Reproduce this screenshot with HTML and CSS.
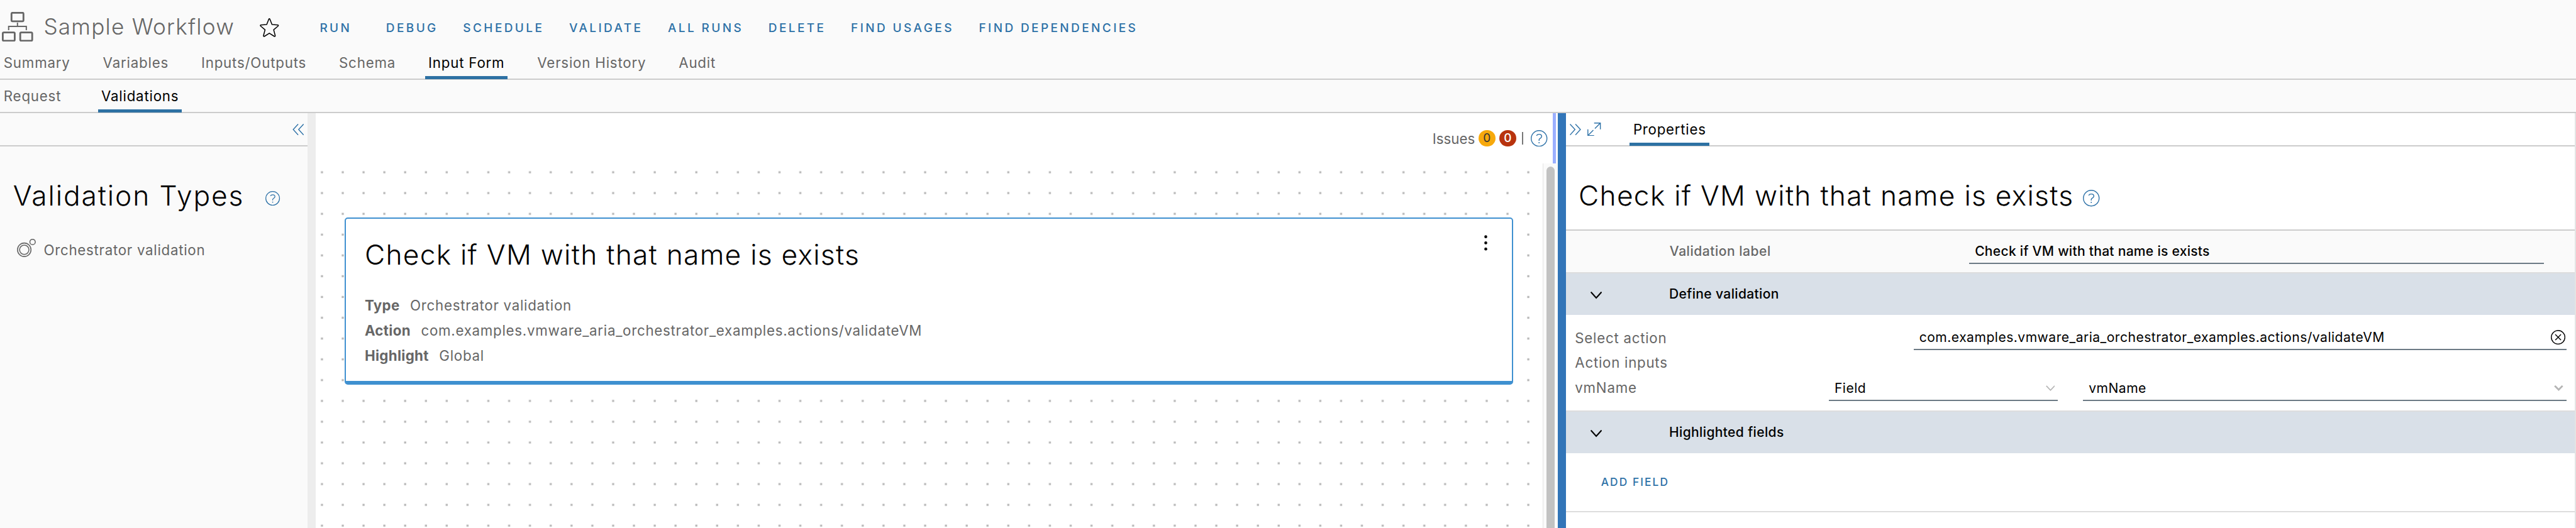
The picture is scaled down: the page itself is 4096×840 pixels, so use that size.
FILE: index.html
```html
<!DOCTYPE html>
<html lang="en">
<head>
<meta charset="utf-8">
<title>Sample Workflow</title>
<link rel="stylesheet" href="styles.css">
</head>
<body>
<div class="app">
  <header class="header">
    <svg class="icon-flow" viewBox="0 0 60 57" fill="none" stroke="currentColor">
      <rect x="18.5" y="1.5" width="23" height="16.5" rx="2" stroke-width="3.4"/>
      <rect x="1.7" y="39.5" width="23" height="16" rx="2" stroke-width="3.4"/>
      <rect x="35.3" y="39.5" width="23" height="16" rx="2" stroke-width="3.4"/>
      <path d="M30 20.5v7M13 35v-7.3h34V35" stroke-width="2.4"/>
    </svg>
    <h1 class="header-title">Sample Workflow</h1>
    <svg class="icon-star" viewBox="0 0 37 37" fill="none" stroke="currentColor" stroke-width="1.9" stroke-linejoin="round">
      <path d="M17.6 1.6q.9-1.4 1.8 0l4.2 10.6 11.3.9q1.6.6.3 2l-8.4 7.1 3 11.3q0 2-1.9 1.3L18.5 28.8l-9.4 6q-1.9.7-1.9-1.3l3-11.300L1.800 15.100q-1.300-1.400.3-2l11.300-.9z"/>
    </svg>
    <nav class="actions">
      <a class="action action-run">RUN</a>
      <a class="action">DEBUG</a>
      <a class="action">SCHEDULE</a>
      <a class="action">VALIDATE</a>
      <a class="action">ALL RUNS</a>
      <a class="action">DELETE</a>
      <a class="action">FIND USAGES</a>
      <a class="action">FIND DEPENDENCIES</a>
    </nav>
  </header>
  <nav class="tabs tabs-main">
    <a class="tab">Summary</a>
    <a class="tab">Variables</a>
    <a class="tab">Inputs/Outputs</a>
    <a class="tab">Schema</a>
    <a class="tab tab-active">Input Form</a>
    <a class="tab">Version History</a>
    <a class="tab">Audit</a>
  </nav>
  <nav class="tabs tabs-sub">
    <a class="tab">Request</a>
    <a class="tab tab-active">Validations</a>
  </nav>
  <main class="workspace">
    <aside class="palette">
      <div class="palette-bar">
        <svg class="icon-collapse" viewBox="0 0 22 22" fill="none" stroke="currentColor" stroke-width="1.7"><path d="M11 .6 1.5 11l9.5 10.4M21.4.6 11.9 11l9.5 10.4"/></svg>
      </div>
      <div class="palette-head">
        <h2 class="heading">Validation Types</h2>
        <svg class="icon-help" viewBox="0 0 32 32" fill="none" stroke="currentColor" stroke-width="1.7"><circle cx="16" cy="16" r="15.1"/><path d="M11 10.6c1.2-1.9 3-2.6 5-2.6 3 0 5 1.7 5 4.1 0 3.8-5 3.6-5 6.4v2"/><circle cx="16" cy="24.3" r="1.2" fill="currentColor" stroke="none"/></svg>
      </div>
      <div class="palette-item">
        <svg class="icon-node" viewBox="0 0 36 36" fill="none" stroke="currentColor" stroke-width="1.9"><circle cx="14" cy="21" r="13"/><circle cx="14" cy="21" r="9"/><circle cx="30" cy="6" r="5.2"/></svg>
        <span class="body">Orchestrator validation</span>
      </div>
    </aside>
    <div class="gutter"></div>
    <section class="stage">
      <div class="stage-bar">
        <span class="body issues">Issues</span>
        <span class="badge badge-warning">0</span>
        <span class="badge badge-error">0</span>
        <span class="divider"></span>
        <svg class="icon-help icon-help-lg" viewBox="0 0 32 32" fill="none" stroke="currentColor" stroke-width="1.7"><circle cx="16" cy="16" r="15.1"/><path d="M11 10.6c1.2-1.9 3-2.6 5-2.6 3 0 5 1.7 5 4.1 0 3.8-5 3.6-5 6.4v2"/><circle cx="16" cy="24.3" r="1.2" fill="currentColor" stroke="none"/></svg>
        <span class="edge"></span>
      </div>
      <div class="stage-body">
        <div class="canvas">
          <svg class="grid-dots" viewBox="0 0 2360 702" preserveAspectRatio="none">
            <defs><pattern id="dots" width="40" height="40" patternUnits="userSpaceOnUse"><rect x="10" y="15" width="4" height="4" fill="#b8b8b8"/></pattern></defs>
            <rect width="2360" height="702" fill="url(#dots)"/>
          </svg>
          <article class="card">
            <h2 class="heading heading-long">Check if VM with that name is exists</h2>
            <dl class="facts">
              <div class="fact"><dt>Type</dt><dd>Orchestrator validation</dd></div>
              <div class="fact"><dt>Action</dt><dd>com.examples.vmware_aria_orchestrator_examples.actions/validateVM</dd></div>
              <div class="fact"><dt>Highlight</dt><dd>Global</dd></div>
            </dl>
            <svg class="icon-kebab" viewBox="0 0 6 30"><circle cx="3" cy="3.2" r="2.8"/><circle cx="3" cy="15" r="2.8"/><circle cx="3" cy="26.8" r="2.8"/></svg>
          </article>
        </div>
        <div class="scroll"><div class="thumb"></div></div>
      </div>
    </section>
    <div class="resizer"></div>
    <aside class="props">
      <div class="props-bar">
        <svg class="icon-expand" viewBox="0 0 22 22" fill="none" stroke="currentColor" stroke-width="1.7"><path d="M.6.6 10.1 11 .6 21.4M11 .6 20.5 11 11 21.4"/></svg>
        <svg class="icon-full" viewBox="0 0 26 26" fill="none" stroke="currentColor" stroke-width="1.7"><path d="M13 1h12v12M25 1 14.5 11.5M13 25H1V13M1 25l10.5-10.5"/></svg>
        <a class="tab tab-active tab-props">Properties</a>
      </div>
      <div class="props-head">
        <h2 class="heading heading-long">Check if VM with that name is exists</h2>
        <svg class="icon-help icon-help-lg" viewBox="0 0 32 32" fill="none" stroke="currentColor" stroke-width="1.7"><circle cx="16" cy="16" r="15.1"/><path d="M11 10.6c1.2-1.9 3-2.6 5-2.6 3 0 5 1.7 5 4.1 0 3.8-5 3.6-5 6.4v2"/><circle cx="16" cy="24.3" r="1.2" fill="currentColor" stroke="none"/></svg>
      </div>
      <div class="label-row">
        <span class="field-label">Validation label</span>
        <div class="input input-label"><span>Check if VM with that name is exists</span></div>
      </div>
      <div class="band">
        <svg class="icon-caret" viewBox="0 0 22 14" fill="none" stroke="currentColor" stroke-width="2.6" stroke-linecap="round"><path d="M1.5 1.5 11 12l9.5-10.500"/></svg>
        <span>Define validation</span>
      </div>
      <div class="params">
        <span class="body">Select action</span>
        <div class="input input-action"><span>com.examples.vmware_aria_orchestrator_examples.actions/validateVM</span>
          <svg class="icon-clear" viewBox="0 0 28 28" fill="none" stroke="currentColor" stroke-width="1.7"><circle cx="14" cy="14" r="13.1"/><path d="m8.500 8.500 11 11m0-11-11 11"/></svg>
        </div>
        <span class="body">Action inputs</span>
        <span class="body">vmName</span>
        <div class="input input-kind"><span>Field</span>
          <svg class="icon-select" viewBox="0 0 18 11" fill="none" stroke="currentColor" stroke-width="2"><path d="m1 1 8 8.500L17 1"/></svg>
        </div>
        <div class="input input-value"><span>vmName</span>
          <svg class="icon-select" viewBox="0 0 18 11" fill="none" stroke="currentColor" stroke-width="3.4"><path d="M1.500 1 9 8.500 16.500 1"/></svg>
        </div>
      </div>
      <div class="band">
        <svg class="icon-caret" viewBox="0 0 22 14" fill="none" stroke="currentColor" stroke-width="2.6" stroke-linecap="round"><path d="M1.500 1.500 11 12l9.500-10.500"/></svg>
        <span>Highlighted fields</span>
      </div>
      <div class="add-row"><a class="action add-field">ADD FIELD</a></div>
    </aside>
  </main>
</div>
</body>
</html>
```
FILE: styles.css
```css
/* 1rem is ten layout units; the whole interface is sized from it */
html {
  font-size: 8.268px;
}

* {
  box-sizing: border-box;
}

body {
  margin: 0;
  font-family: Inter, "Noto Sans", sans-serif;
  font-size: 2.7rem;
  letter-spacing: 0.087rem;
  color: #666;
  background: #fff;
}

h1, h2, dl, dd {
  margin: 0;
  font-weight: 400;
}

svg {
  display: block;
  flex: none;
}

.app {
  display: flex;
  flex-direction: column;
  width: 100vw;
  height: 100vh;
  overflow: hidden;
  white-space: nowrap;
}

/* header */
.header {
  display: flex;
  align-items: center;
  height: 10.2rem;
  padding-left: 0.4rem;
  background: #fafafa;
}

.icon-flow {
  width: 6rem;
  height: 5.7rem;
}

.header-title {
  width: 41.6rem;
  margin-left: 2rem;
  font-size: 4.25rem;
  font-weight: 300;
  line-height: 1;
  letter-spacing: 0.147rem;
}

.icon-star {
  width: 3.7rem;
  height: 3.7rem;
  margin-top: 0.5rem;
  color: #000;
}

.actions {
  display: flex;
  gap: 4.8rem;
  margin: 0.5rem 0 0 7.8rem;
}

.action {
  font-size: 2.3rem;
  font-weight: 500;
  line-height: 1;
  letter-spacing: 0.41rem;
  color: #2d71a7;
}

.action-run {
  width: 7.95rem;
}

/* tabs */
.tabs {
  display: flex;
  padding-left: 0.1rem;
  gap: 5.08rem;
  border-bottom: 2px solid #ccc;
  background: #fafafa;
  letter-spacing: 0.095rem;
}

.tabs-main {
  height: 5.2rem;
}

.tabs-sub {
  gap: 6.5rem;
  height: 6.4rem;
}

.tab {
  position: relative;
  padding: 0 0.6rem;
  line-height: 3.9rem;
}

.tabs-sub .tab {
  line-height: 6.2rem;
}

.tab-active {
  color: #000;
}

.tab-active::after {
  content: "";
  position: absolute;
  right: 0;
  bottom: -1px;
  left: 0;
  height: 0.6rem;
  background: #2d71a3;
}

/* workspace */
.workspace {
  display: flex;
  flex: 1;
  min-height: 0;
}

.heading {
  font-size: 5.36rem;
  font-weight: 300;
  line-height: 1;
  letter-spacing: 0.231rem;
  color: #000;
}

.heading-long {
  letter-spacing: 0.151rem;
}

.icon-help {
  width: 2.8rem;
  height: 2.8rem;
  color: #2d71a7;
}

.icon-help-lg {
  width: 3.2rem;
  height: 3.2rem;
}

.palette {
  width: 59.1rem;
  background: #fafafa;
}

.palette-bar {
  display: flex;
  align-items: center;
  justify-content: flex-end;
  height: 6.4rem;
  padding: 0 0.7rem 0 0;
  border-bottom: 2px solid #ccc;
  color: #2d71a7;
}

.icon-collapse,
.icon-expand {
  width: 2.2rem;
  height: 2.2rem;
}

.palette-head {
  display: flex;
  align-items: center;
  margin: 6.8rem 0 0 2.5rem;
}

.palette-head .heading {
  width: 48.6rem;
}

.palette-head .icon-help {
  margin-top: 1.1rem;
}

.palette-item {
  display: flex;
  align-items: center;
  gap: 1.5rem;
  margin: 5.6rem 0 0 3.3rem;
}

.palette-item .body {
  margin-top: 0.7rem;
}

.icon-node {
  width: 3.6rem;
  height: 3.6rem;
}

.body {
  line-height: 1;
}

.gutter {
  width: 1.6rem;
  background: #ededed;
}

/* stage */
.stage {
  display: flex;
  flex-direction: column;
  width: 238.9rem;
}

.stage-bar {
  display: flex;
  align-items: center;
  justify-content: flex-end;
  height: 9.6rem;
}

.issues {
  margin: 0.2rem 0.7rem 0 0;
  letter-spacing: 0;
}

.badge {
  width: 3.2rem;
  height: 3.2rem;
  margin-right: 0.8rem;
  border-radius: 50%;
  font-size: 2.3rem;
  line-height: 3.2rem;
  letter-spacing: 0;
  text-align: center;
}

.badge-warning {
  color: #333;
  background: #f7a90c;
}

.badge-error {
  font-weight: 500;
  color: #fff;
  background: #b8330e;
}

.divider {
  width: 2px;
  height: 2.4rem;
  margin: 0 1.5rem 0 0.3rem;
  background: #777;
}

.edge {
  align-self: stretch;
  width: 0.6rem;
  margin: 0 0.4rem 0 1rem;
  background: #9bafff;
}

.stage-body {
  display: flex;
  flex: 1;
  min-height: 0;
  overflow: hidden;
}

.canvas {
  position: relative;
  flex: 1;
  padding: 10.4rem 5.7rem 0 5.6rem;
}

.grid-dots {
  position: absolute;
  top: 0;
  left: 0;
  width: 236rem;
  height: 70.2rem;
}

.card {
  position: relative;
  height: 32.2rem;
  padding: 4.3rem 0 0 3.6rem;
  border: 2px solid #3f90d0;
  border-bottom-width: 0.8rem;
  border-radius: 0.6rem;
  background: #fff;
}

.facts {
  margin-top: 4.7rem;
}

.fact {
  display: flex;
  gap: 2rem;
  line-height: 4.8rem;
}

.fact dt {
  font-weight: 700;
  letter-spacing: 0.04rem;
}

.icon-kebab {
  position: absolute;
  top: 3.2rem;
  right: 4.7rem;
  width: 0.6rem;
  height: 3rem;
  fill: #000;
}

.scroll {
  width: 2.9rem;
  padding: 0.6rem 0.5rem 0 0.6rem;
  border-left: 1px solid #e3e3e3;
  background: #fafafa;
}

.thumb {
  width: 1.6rem;
  height: 80rem;
  border-radius: 0.8rem;
  background: #c2c2c2;
}

.resizer {
  width: 1.6rem;
  background: #3275b8;
}

/* properties */
.props {
  flex: 1;
  color: #000;
  border-right: 2px solid #e4e4e4;
}

.props .body {
  color: #666;
}

.props-bar {
  display: flex;
  align-items: center;
  height: 6.4rem;
  padding-left: 0.7rem;
  border-bottom: 2px solid #ccc;
  color: #2d71a7;
}

.icon-full {
  width: 2.6rem;
  height: 2.6rem;
  margin-left: 1.2rem;
}

.tab-props {
  margin-left: 5.5rem;
  padding: 0 0.7rem;
  line-height: 6.2rem;
  color: #000;
}

.props-head {
  display: flex;
  align-items: center;
  height: 16.2rem;
  padding: 2.9rem 0 0 2.4rem;
  border-bottom: 2px solid #ccc;
}

.props-head .heading {
  width: 97rem;
}

.props-head .icon-help {
  margin-top: 1.1rem;
}

.label-row {
  display: flex;
  height: 8rem;
  padding-top: 1.4rem;
  background: #fafafa;
}

.field-label {
  width: 57.6rem;
  margin-left: 19.9rem;
  font-size: 2.55rem;
  font-weight: 500;
  line-height: 5rem;
  letter-spacing: 0.061rem;
  color: #666;
}

.input {
  display: flex;
  align-items: center;
  height: 5rem;
  padding: 0.2rem 0 0 1.1rem;
  border-bottom: 2px solid #6c7a85;
  font-size: 2.55rem;
  letter-spacing: 0.059rem;
}

.input svg {
  margin-left: auto;
}

.input-label {
  width: 110.5rem;
  font-weight: 500;
  letter-spacing: 0.032rem;
}

.band {
  display: flex;
  align-items: center;
  height: 8.2rem;
  padding: 0 0 0.2rem 4.7rem;
  border-top: 2px solid #ddd;
  font-size: 2.55rem;
  font-weight: 500;
  letter-spacing: 0.041rem;
  background: #d9e0e8;
}

.icon-caret {
  width: 2.2rem;
  height: 1.4rem;
  margin: 0.7rem 12.9rem 0 0;
}

.params {
  display: grid;
  grid-template-columns: 48.8rem 16.3rem 27.8rem 4.8rem 93rem;
  grid-template-rows: 6.8rem 4.8rem 6.8rem;
  height: 18.4rem;
  padding-left: 1.7rem;
}

.params > .body {
  grid-column: 1;
  line-height: 4.8rem;
}

.params > .body:first-child {
  padding-top: 2rem;
}

.input-action {
  grid-column: 3 / 6;
  align-self: end;
}

.input-kind {
  grid-column: 2 / 4;
}

.input-value {
  grid-column: 5;
}

.input-kind,
.input-value {
  grid-row: 3;
}

.icon-clear {
  width: 2.8rem;
  height: 2.8rem;
  margin-right: 0.2rem;
}

.icon-select {
  width: 1.8rem;
  height: 1.1rem;
  margin-right: 0.6rem;
  color: #b5b5b5;
}

.add-row {
  display: flex;
  align-items: center;
  height: 11.4rem;
  padding: 0 0 0 6.7rem;
  border-bottom: 2px solid #ddd;
}

.add-field {
  font-size: 2.1rem;
  letter-spacing: 0.25rem;
}
```
